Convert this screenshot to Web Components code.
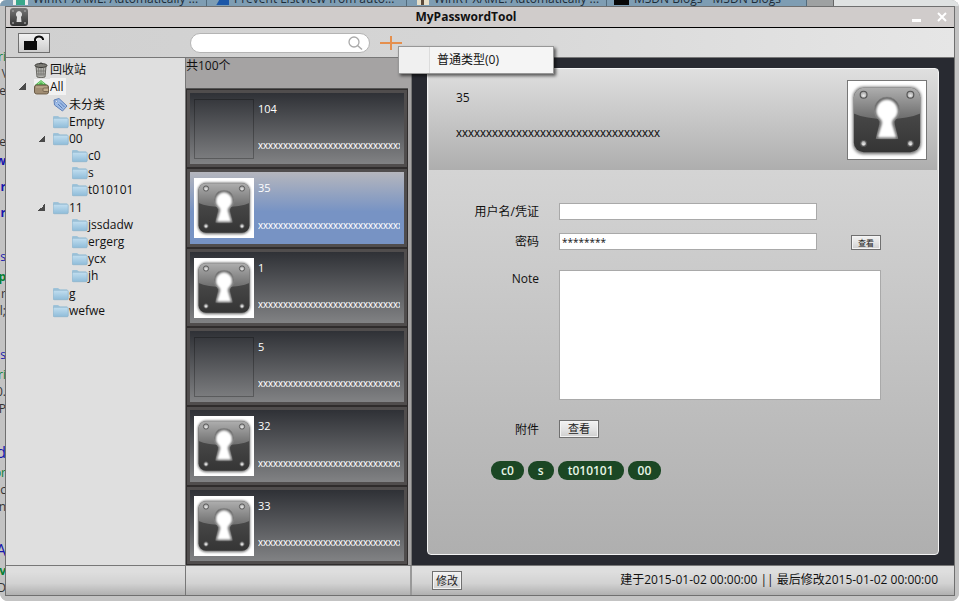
<!DOCTYPE html>
<html lang="zh-CN">
<head>
<meta charset="utf-8">
<title>MyPasswordTool</title>
<style>
html, body { margin: 0; height: 100%; }
body { font: 12px/17px "Open Sans", "Noto Sans", "Noto Sans CJK SC", sans-serif; color: #111; background: #fff; overflow: hidden; }
</style>
</head>
<body>
<desk-top>
  <app-window></app-window>
</desk-top>

<template id="desk-top">
<style>
:host { display: grid; box-sizing: border-box; min-height: 100vh; padding: 6px 4px 5px 5px; position: relative; background: #bfbfbf; border-radius: 6px 8px 8px 8px; overflow: hidden; }
.behind { position: absolute; inset: 0; overflow: hidden; background: #c3c3c3; }
.tabs { display: flex; height: 6px; background: #dfe2e2; overflow: hidden; }
.tab { box-sizing: border-box; width: 200px; flex: none; display: flex; align-items: flex-end; gap: 5px; padding-left: 7px; background: #7e9db3; border-right: 1px solid #526b7c; color: #1d2c38; font-size: 12px; line-height: 14px; white-space: nowrap; overflow: hidden; }
.tab:first-child { width: 207px; padding-left: 13px; }
.tab i { width: 15px; height: 5px; flex: none; align-self: flex-start; }
.new { width: 26px; background: #9ea1a2; border-right: 1px solid #666; }
.text { width: 6px; display: flex; flex-direction: column; align-items: flex-end; overflow: hidden; white-space: nowrap; font-size: 12px; line-height: 17px; padding-top: 42px; color: #333; }
.text span { height: 17px; }
.g { color: #078033; } .b { color: #1616ad; } .text .h { font-size: 16px; line-height: 22px; height: 22px; } .s { font-weight: bold; }
.text .a { margin-top: 9px; } .text .c { margin-top: 27px; height: 20px; } .text .h.c { margin-top: 24px; height: 23px; } .text .d { margin-top: 34px; height: 19px; }
slot { display: block; }
.front { position: relative; display: grid; }
.front ::slotted(*) { min-height: 0; }
</style>
<div class="behind" aria-hidden="true">
  <div class="tabs">
    <div class="tab"><i style="background:linear-gradient(90deg,#eee 3px,#3aa88b 3px 12px,#eee 12px)"></i>WinRT XAML: Automatically ...</div>
    <div class="tab"><i style="background:linear-gradient(120deg,#7e9db3 4px,#1c57a8 5px)"></i>Prevent ListView from auto...</div>
    <div class="tab"><i style="background:linear-gradient(90deg,#7e9db3 3px,#e8dfc8 3px 7px,#5b4a3a 7px 10px,#e8dfc8 10px)"></i>WinRT XAML: Automatically ...</div>
    <div class="tab"><i style="background:#080808"></i>MSDN Blogs - MSDN Blogs</div>
    <div class="new"></div>
  </div>
  <div class="text">
    <span class="g">ri</span><span>o \</span><span>ne</span>
    <span class="d">e</span><span class="b s">w</span><span class="b s a">r</span><span class="b s a">r</span>
    <span class="b c">s</span><span class="g s">p</span><span>) r</span><span>l;</span>
    <span class="b c">s</span><span class="g">ri</span><span>0.</span><span>P</span>
    <span class="b h c">d</span><span class="g">or</span><span>nc</span><span>In</span>
    <span class="b h c">A</span><span class="g s">ov</span><span>D</span>
  </div>
</div>
<div class="front"><slot></slot></div>
</template>

<template id="app-window">
<style>
:host { display: grid; grid-template-rows: auto auto 1fr auto; height: 100%; box-sizing: border-box; border: 1px solid #6f6f6f; background: #dfdfdf; }
.main, .foot { display: grid; grid-template-columns: 180px 226px minmax(0, 1fr); }
.main > *, .foot > * { min-width: 0; }
folder-tree, .f1 { border-right: 1px solid #777; }
.foot { border-top: 1px solid #777; background: linear-gradient(#dedede 20%, #d2d2d2 60%, #b0b0b0); height: 29px; }
.f2 { border-right: 2px solid #999; }
.f3 { display: flex; align-items: center; justify-content: space-between; padding: 0 16px 0 20px; white-space: nowrap; }
.f3 span { padding-bottom: 3px; }
</style>
<title-bar>MyPasswordTool</title-bar>
<tool-bar></tool-bar>
<div class="main">
  <folder-tree></folder-tree>
  <entry-list></entry-list>
  <entry-detail></entry-detail>
</div>
<div class="foot">
  <div class="f1"></div><div class="f2"></div>
  <div class="f3"><flat-button style="--h:19px;--w:30px">修改</flat-button><span>建于2015-01-02 00:00:00 || 最后修改2015-01-02 00:00:00</span></div>
</div>
</template>

<template id="lock-logo">
<style>:host { display: block; } svg { display: block; width: 100%; height: 100%; }</style>
<svg viewBox="0 0 80 80" aria-hidden="true">
  <defs>
    <linearGradient id="lo" x1="0" y1="0" x2="0" y2="1"><stop offset="0" stop-color="#555"/><stop offset=".5" stop-color="#444"/><stop offset="1" stop-color="#343434"/></linearGradient>
    <linearGradient id="hi" x1="0" y1="0" x2="0" y2="1"><stop offset="0" stop-color="#b0b0b0"/><stop offset="1" stop-color="#6c6c6c"/></linearGradient>
    <radialGradient id="rv" cx=".5" cy=".65" r=".6"><stop offset="0" stop-color="#eee"/><stop offset="1" stop-color="#9a9a9a"/></radialGradient>
    <filter id="bl" x="-20%" y="-20%" width="140%" height="140%"><feGaussianBlur stdDeviation="1.5"/></filter>
    <filter id="sm" x="-20%" y="-20%" width="140%" height="140%"><feGaussianBlur stdDeviation="1.1"/></filter>
    <clipPath id="cp"><rect x="6" y="7" width="68" height="66" rx="10"/></clipPath>
  </defs>
  <rect width="80" height="80" fill="#fff"/>
  <rect x="5" y="6" width="70" height="69" rx="11" fill="#777" filter="url(#bl)"/>
  <g clip-path="url(#cp)"><rect x="5" y="6" width="70" height="69" fill="url(#lo)"/><path d="M5 6H75V33Q62 39 40 39T5 33Z" fill="url(#hi)"/></g>
  <path d="M40 16.500a13 13 0 0 0-8.500 23q2 2 1 5L29 59H51L47.500 44.500q-1-3 1-5A13 13 0 0 0 40 16.500Z" fill="#666" stroke="#858585" stroke-width=".6"/>
  <path d="M40 19.500a11 11 0 0 0-7 19q3 2 2 6L31 57.500H49L45 44.500q-1-4 2-6A11 11 0 0 0 40 19.500Z" fill="#fff" stroke="#fff" stroke-width="1" filter="url(#sm)"/>
  <g fill="url(#rv)" stroke="#555" stroke-width="1.200"><circle cx="16" cy="14" r="3.500"/><circle cx="64" cy="14" r="3.500"/><circle cx="16" cy="64" r="3"/><circle cx="64" cy="64" r="3"/></g>
</svg>
</template>

<template id="flat-button">
<style>
:host { display: inline-block; }
button { display: block; box-sizing: border-box; min-width: var(--w, 40px); height: var(--h, 18px); padding: 0 2px; border: 1px solid #707070; box-shadow: inset 0 0 0 1px #f4f4f4; background: linear-gradient(#f2f2f2, #e4e4e4 50%, #cfcfcf); color: #222; font: inherit; font-size: var(--fs, 11px); line-height: 12px; }
</style>
<button type="button"><slot></slot></button>
</template>

<template id="title-bar">
<style>
:host { display: flex; align-items: center; height: 20px; background: #d0cccb; border-bottom: 1px solid #000; padding-left: 4px; }
.logo { width: 18px; height: 18px; border-radius: 3px; background: linear-gradient(#777, #333); }
svg { display: block; }
h1 { flex: 1; margin: 0; font-size: 12px; line-height: 20px; font-weight: bold; text-align: center; }
button { width: 25px; height: 20px; padding: 0; border: 0; background: none; display: grid; place-items: center; }
</style>
<svg class="logo" viewBox="0 0 18 18"><g fill="#999"><circle cx="3" cy="3" r="1"/><circle cx="15" cy="3" r="1"/><circle cx="3" cy="15" r="1"/><circle cx="15" cy="15" r="1"/></g><path d="M9 3a3.500 3.500 0 0 0-2 6L6.500 14h5L11 9a3.500 3.500 0 0 0-2-6Z" fill="#ddd"/></svg>
<h1><slot></slot></h1>
<button type="button" aria-label="最小化"><svg width="10" height="10"><path d="M0 7H9V10H0Z" fill="#fff"/></svg></button>
<button type="button" aria-label="关闭"><svg width="10" height="10"><path d="M1 1L9 9M9 1L1 9" stroke="#fff" stroke-width="2"/></svg></button>
</template>

<template id="tool-bar">
<style>
:host { display: grid; grid-template-columns: 184px 180px auto; align-items: center; justify-content: start; height: 29px; border-bottom: 1px solid #777; background: linear-gradient(90deg, #d0d0d0, #d5d5d5 45%, #e6e6e6); }
button { padding: 0; font: inherit; }
.lock { width: 32px; height: 20px; margin-left: 12px; border: 1px solid #707070; background: linear-gradient(#f2f2f2, #cdcdcd); display: grid; place-items: center; }
svg { display: block; }
.search { display: flex; align-items: center; box-sizing: border-box; height: 20px; border: 1px solid #b4b4b4; border-radius: 10px; background: #fff; padding: 0 6px 0 10px; }
input { flex: 1; min-width: 0; border: 0; outline: 0; background: none; font: inherit; padding: 0; }
.add { position: relative; margin-left: 10px; }
.plus { display: block; border: 0; background: none; }
menu { position: absolute; z-index: 2; left: 18px; top: 10px; box-sizing: border-box; width: 156px; margin: 0; padding: 1px; border: 1px solid #979797; background: linear-gradient(90deg, #f0f0f0 30px, #dcdcdc 30px 31px, #f5f5f5 31px); box-shadow: 2px 2px 3px #0009; list-style: none; }
menu button { display: block; width: 100%; height: 24px; padding: 0 0 0 37px; border: 0; background: none; text-align: left; color: #111; }
</style>
<button class="lock" type="button" aria-label="解锁"><svg width="22" height="16" viewBox="0 0 22 16"><path d="M1 6H14V15H1Z" fill="#0c0c0c"/><path d="M12 7V4Q13 1.500 16 1.500T20 4V5" fill="none" stroke="#0c0c0c" stroke-width="2"/></svg></button>
<label class="search"><input type="text" aria-label="搜索"><svg width="16" height="16" viewBox="0 0 16 16"><circle cx="7" cy="7" r="5" fill="none" stroke="#aaa" stroke-width="1.300"/><path d="M10.500 10.500L15 14.500" stroke="#aaa" stroke-width="1.500"/></svg></label>
<div class="add">
  <button class="plus" type="button" aria-label="添加"><svg width="22" height="14"><path d="M0 7H22M11 0V14" stroke="#e58f4d" stroke-width="2"/></svg></button>
  <menu><li><button type="button">普通类型(0)</button></li></menu>
</div>
</template>

<template id="tree-icon">
<style>:host { display: block; flex: none; width: 16px; height: 16px; } svg { display: none; width: 16px; height: 16px; }
:host([kind="folder"]) .folder, :host([kind="bin"]) .bin, :host([kind="wallet"]) .wallet, :host([kind="tag"]) .tag { display: block; }</style>
<svg class="folder" viewBox="0 0 16 16"><defs><linearGradient id="f" x1="0" y1="0" x2="0" y2="1"><stop offset="0" stop-color="#c3dff0"/><stop offset="1" stop-color="#8fbcd9"/></linearGradient></defs><path d="M0 3Q0 2 1 2H5L7 3.500H14V6H0Z" fill="#9fc3d9"/><rect x=".2" y="4.200" width="15" height="9.500" rx="1" fill="url(#f)" stroke="#8bb3cc" stroke-width=".7"/></svg>
<svg class="bin" viewBox="0 0 16 16"><path d="M2 4H12L11 15Q7 16.500 3 15Z" fill="#b4b4b0" stroke="#66655f"/><path d="M4.500 6L5 14M7 6V14M9.500 6L9 14M2.500 9H11.500M3 12H11" stroke="#75746f" stroke-width=".8"/><ellipse cx="7" cy="3.500" rx="6" ry="2" fill="#7d7c76" stroke="#3a3935"/><path d="M5 2L7 .8L9 2" fill="none" stroke="#444"/></svg>
<svg class="wallet" viewBox="0 0 16 16"><path d="M1 6L7 1L13 6V9H1Z" fill="#4bb84e"/><path d="M4 5L7 2.500L10 5" fill="none" stroke="#a9e4a0"/><rect x=".5" y="6" width="14" height="9" rx="2" fill="#a08d73" stroke="#6a5b47"/><path d="M2 8H13" stroke="#c6b599"/><rect x="9" y="9" width="5.500" height="3.500" rx="1" fill="#c3b091" stroke="#6a5b47" stroke-width=".8"/></svg>
<svg class="tag" viewBox="0 0 16 16"><path d="M1 3L6 1.500L14 9L9.500 14L1.500 8Z" fill="#9dbbe6" stroke="#5f80b8"/><path d="M5 7L9.500 11.500M7 5.500L11.500 10" stroke="#587bb5"/><circle cx="3.500" cy="4.300" r="1" fill="#fff" stroke="#5f80b8" stroke-width=".6"/></svg>
</template>

<template id="folder-tree">
<style>
:host { display: block; background: #dfdfdf; padding-top: 3px; }
ul { list-style: none; margin: 0; padding: 0; }
.root { padding-left: 12px; }
.root ul { padding-left: 19px; }
.root .open { padding-top: 1px; }
.root .end { padding-top: 0; padding-bottom: 1px; }
a { display: flex; width: max-content; align-items: center; height: 17px; color: inherit; text-decoration: none; }
a::before { content: ""; width: 16px; height: 7px; background: linear-gradient(135deg, transparent 50%, #4a4a4a 50%) 1px 0 / 7px 7px no-repeat; }
a:not(.x)::before { background: none; }
.sel span { background: #f2f2f2; padding-right: 2px; }
.sel tree-icon { background: #f2f2f2; }
</style>
<ul class="root"></ul>
</template>

<template id="entry-item">
<style>
:host { flex: 1 0 auto; display: flex; box-sizing: border-box; border: 1px solid #2f2c2c; background: #504d4d; padding: 3px; color: #fff; font-size: 11px; --a: #2f3136; --b: #818284; }
.in { flex: 1; min-width: 0; display: flex; gap: 4px; padding: 6px 4px 5px; background: linear-gradient(var(--a), var(--b)); }
:host([selected]) .in { background: linear-gradient(#b5b6bd, #7793c4 55%); }
.thumb { flex: none; box-sizing: border-box; width: 60px; height: 60px; border: 1px solid #0004; }
:host([logo]) .thumb { border: 0; }
:host(:not([logo])) lock-logo { display: none; }
lock-logo { height: 60px; }
.t { flex: 1; min-width: 0; display: flex; flex-direction: column; justify-content: space-between; padding: 2px 0 5px; line-height: 16px; }
.t div { overflow: hidden; white-space: nowrap; }
.t .n { font-family: "Liberation Sans", sans-serif; font-size: 10px; }
</style>
<div class="in"><div class="thumb"><lock-logo></lock-logo></div><div class="t"><div><slot></slot></div><div class="n"></div></div></div>
</template>

<template id="entry-list">
<style>
:host { display: flex; flex-direction: column; background: #a5a3a3; border-right: 1px solid #777; }
.count { height: 30px; line-height: 16px; }
.items { flex: 1; display: flex; flex-direction: column; margin-right: 3px; border-top: 1px solid #555; }
</style>
<div class="count">共100个</div>
<div class="items">
<entry-item>104</entry-item><entry-item logo selected>35</entry-item><entry-item logo>1</entry-item><entry-item>5</entry-item><entry-item logo>32</entry-item><entry-item logo>33</entry-item>
</div>
</template>

<template id="entry-detail">
<style>
:host { display: grid; background: #282a31; padding: 10px 15px; }
.card { border: 1px solid #f4f4f4; border-radius: 4px; padding: 0 1px; background: linear-gradient(#dedede, #afafaf); min-width: 0; }
header { display: flex; justify-content: space-between; box-sizing: border-box; height: 101px; padding: 11px 10px 10px 27px; background: linear-gradient(#dfdfdf, #aeaeae); }
header p { margin: 0; padding-top: 9px; }
header p + p { padding-top: 19px; font-family: "Liberation Sans", sans-serif; }
lock-logo { width: 78px; height: 78px; border: 1px solid #777; }
form { display: grid; grid-template-columns: 130px minmax(0, 258px) 64px; align-items: center; padding-top: 33px; row-gap: 13px; }
label, .lab { justify-self: end; padding-right: 20px; }
.tl { align-self: start; }
input, textarea { box-sizing: border-box; width: 100%; border: 1px solid #a9a9a9; border-radius: 0; background: #fff; font: inherit; color: #111; outline: 0; margin: 0; }
input { height: 17px; padding: 0 2px; line-height: 15px; }
#p { font-size: 10px; }
textarea { display: block; height: 130px; resize: none; }
.wide { grid-column: 2 / 4; }
.gap { margin-top: 7px; }
flat-button.r { justify-self: end; padding-top: 2px; }
.tags { display: flex; flex-wrap: wrap; gap: 4px; padding: 23px 0 0 62px; }
.tags span { background: #1b4724; color: #e6f5e6; border-radius: 9px; padding: 0 10px; line-height: 19px; font-weight: 600; }
</style>
<div class="card">
  <header><div><p>35</p><p class="note"></p></div><lock-logo></lock-logo></header>
  <form>
    <label for="u">用户名/凭证</label><input id="u" type="text"><i></i>
    <label for="p">密码</label><input id="p" type="text" value="********"><flat-button class="r" style="--w:30px;--h:15px;--fs:8px">查看</flat-button>
    <label class="gap tl" for="n">Note</label><textarea id="n" class="wide gap"></textarea>
    <span class="lab gap">附件</span><flat-button class="gap">查看</flat-button>
  </form>
  <div class="tags"><span>c0</span><span>s</span><span>t010101</span><span>00</span></div>
</div>
</template>

<script>
const define = (name, setup) => customElements.define(name, class extends HTMLElement {
  constructor() {
    super();
    const root = this.attachShadow({ mode: "open" });
    root.append(document.getElementById(name).content.cloneNode(true));
    if (setup) setup(root);
  }
});

const folders = [
  { n: "回收站", k: "bin" },
  { n: "All", k: "wallet", sel: true, c: [
    { n: "未分类", k: "tag" }, { n: "Empty" },
    { n: "00", c: [{ n: "c0" }, { n: "s" }, { n: "t010101" }] },
    { n: "11", c: [{ n: "jssdadw" }, { n: "ergerg" }, { n: "ycx" }, { n: "jh" }] },
    { n: "g" }, { n: "wefwe" }
  ] }
];
const node = f => `<li><a href="#" class="${f.c ? "x" : ""} ${f.sel ? "sel" : ""}"><tree-icon kind="${f.k || "folder"}"></tree-icon><span>${f.n}</span></a>${f.c ? `<ul class="open ${f.sel ? "" : "end"}">${f.c.map(node).join("")}</ul>` : ""}</li>`;

define("lock-logo");
define("flat-button");
define("tree-icon");
define("title-bar");
define("tool-bar");
define("folder-tree", r => { r.querySelector(".root").innerHTML = folders.map(node).join(""); });
define("entry-item", r => { r.querySelector(".n").textContent = "x".repeat(34); });
define("entry-list");
define("entry-detail", r => { r.querySelector(".note").textContent = "x".repeat(34); });
define("app-window");
define("desk-top");
</script>
</body>
</html>
